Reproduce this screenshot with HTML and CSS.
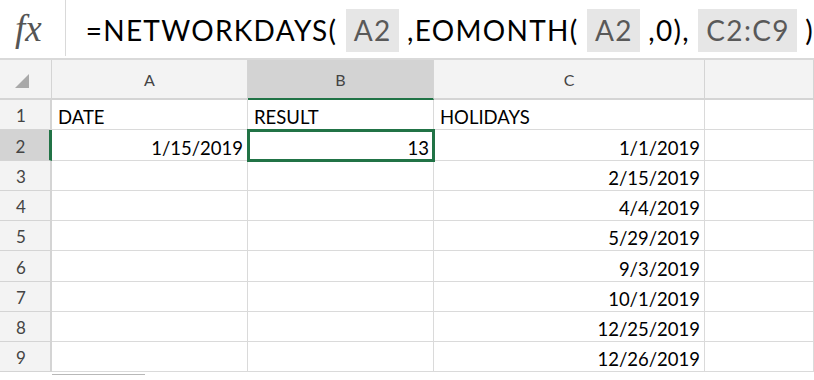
FILE: index.html
```html
<!DOCTYPE html>
<html lang="en">
<head>
    <meta charset="UTF-8">
    <meta name="viewport" content="width=device-width, initial-scale=1.0">
    <title>NETWORKDAYS with EOMONTH</title>
    <link rel="stylesheet" href="styles.css">
</head>
<body>

    <div class="formula-bar">
        <div class="fx">fx</div>
        <div class="formula">=NETWORKDAYS( <span class="ref">A2</span> ,EOMONTH( <span class="ref">A2</span> ,0), <span class="ref">C2:C9</span> )</div>
    </div>

    <table class="sheet">
        <colgroup>
            <col class="col-head">
            <col class="col-a">
            <col class="col-b">
            <col class="col-c">
            <col class="col-d">
        </colgroup>
        <thead>
            <tr>
                <th class="corner">
                    <svg width="14" height="14" viewBox="0 0 14 14"><polygon points="14,0 14,14 0,14" fill="#a9a9a9"/></svg>
                </th>
                <th>A</th>
                <th class="active">B</th>
                <th>C</th>
                <th></th>
            </tr>
        </thead>
        <tbody>
            <tr>
                <th class="row-num">1</th>
                <td>DATE</td>
                <td>RESULT</td>
                <td>HOLIDAYS</td>
                <td></td>
            </tr>
            <tr>
                <th class="row-num active">2</th>
                <td class="num">1/15/2019</td>
                <td class="num selected">13</td>
                <td class="num">1/1/2019</td>
                <td></td>
            </tr>
            <tr>
                <th class="row-num">3</th>
                <td></td>
                <td></td>
                <td class="num">2/15/2019</td>
                <td></td>
            </tr>
            <tr>
                <th class="row-num">4</th>
                <td></td>
                <td></td>
                <td class="num">4/4/2019</td>
                <td></td>
            </tr>
            <tr>
                <th class="row-num">5</th>
                <td></td>
                <td></td>
                <td class="num">5/29/2019</td>
                <td></td>
            </tr>
            <tr>
                <th class="row-num">6</th>
                <td></td>
                <td></td>
                <td class="num">9/3/2019</td>
                <td></td>
            </tr>
            <tr>
                <th class="row-num">7</th>
                <td></td>
                <td></td>
                <td class="num">10/1/2019</td>
                <td></td>
            </tr>
            <tr>
                <th class="row-num">8</th>
                <td></td>
                <td></td>
                <td class="num">12/25/2019</td>
                <td></td>
            </tr>
            <tr>
                <th class="row-num">9</th>
                <td></td>
                <td></td>
                <td class="num">12/26/2019</td>
                <td></td>
            </tr>
        </tbody>
    </table>

    <div class="scroll-thumb"></div>

</body>
</html>
```

FILE: styles.css
```css
body {
    margin: 0;
    padding: 0;
    background-color: #fff;
    font-family: 'Lato', 'Open Sans', sans-serif;
    color: #000;
    overflow: hidden;
}

.formula-bar {
    display: flex;
    align-items: stretch;
    height: 58px;
    border-bottom: 2px solid #d9d9d9;
}

.fx {
    width: 52px;
    padding-left: 15px;
    border-right: 1px solid #d9d9d9;
    margin-bottom: 2px;
    font-family: 'Liberation Serif', serif;
    font-style: italic;
    font-size: 37px;
    color: #555;
    line-height: 58px;
}

.formula {
    padding-left: 20px;
    font-size: 28px;
    line-height: 60px;
    white-space: nowrap;
    letter-spacing: 1.3px;
}

.ref {
    display: inline-block;
    background-color: #e6e6e6;
    color: #595959;
    padding: 0 7px 0 8px;
    line-height: 43px;
}

.sheet {
    border-collapse: separate;
    border-spacing: 0;
    table-layout: fixed;
    width: 814px;
}

.col-head { width: 52px; }
.col-a { width: 196px; }
.col-b { width: 186px; }
.col-c { width: 271px; }
.col-d { width: 109px; }

thead tr {
    height: 40px;
}

thead th {
    padding: 0;
    background-color: #f3f3f3;
    border-right: 1px solid #d4d4d4;
    border-bottom: 2px solid #d4d4d4;
    font-weight: normal;
    font-size: 16px;
    color: #444;
    text-align: center;
    vertical-align: middle;
}

thead th.active {
    background-color: #d3d3d3;
    border-bottom-color: #217346;
}

thead th.corner {
    padding-right: 8px;
    padding-top: 4px;
}

tbody tr {
    height: 30.25px;
}

.row-num {
    padding: 0 8px 3px 0;
    background-color: #f3f3f3;
    border-right: 2px solid #d4d4d4;
    border-bottom: 1px solid #d4d4d4;
    font-weight: normal;
    font-size: 17px;
    color: #444;
    text-align: center;
    vertical-align: bottom;
    line-height: 20px;
}

.row-num.active {
    background-color: #d3d3d3;
    border-right: 3px solid #217346;
}

td {
    padding: 0 4px 2px 6px;
    border-right: 1px solid #dadada;
    border-bottom: 1px solid #dadada;
    font-size: 18.5px;
    line-height: 20px;
    vertical-align: bottom;
    white-space: nowrap;
}

td.num {
    text-align: right;
}

td.selected {
    outline: 3px solid #217346;
    outline-offset: -2px;
}

.scroll-thumb {
    width: 93px;
    height: 1px;
    margin: 2px 0 0 52px;
    background-color: #b8b8b8;
}
```
